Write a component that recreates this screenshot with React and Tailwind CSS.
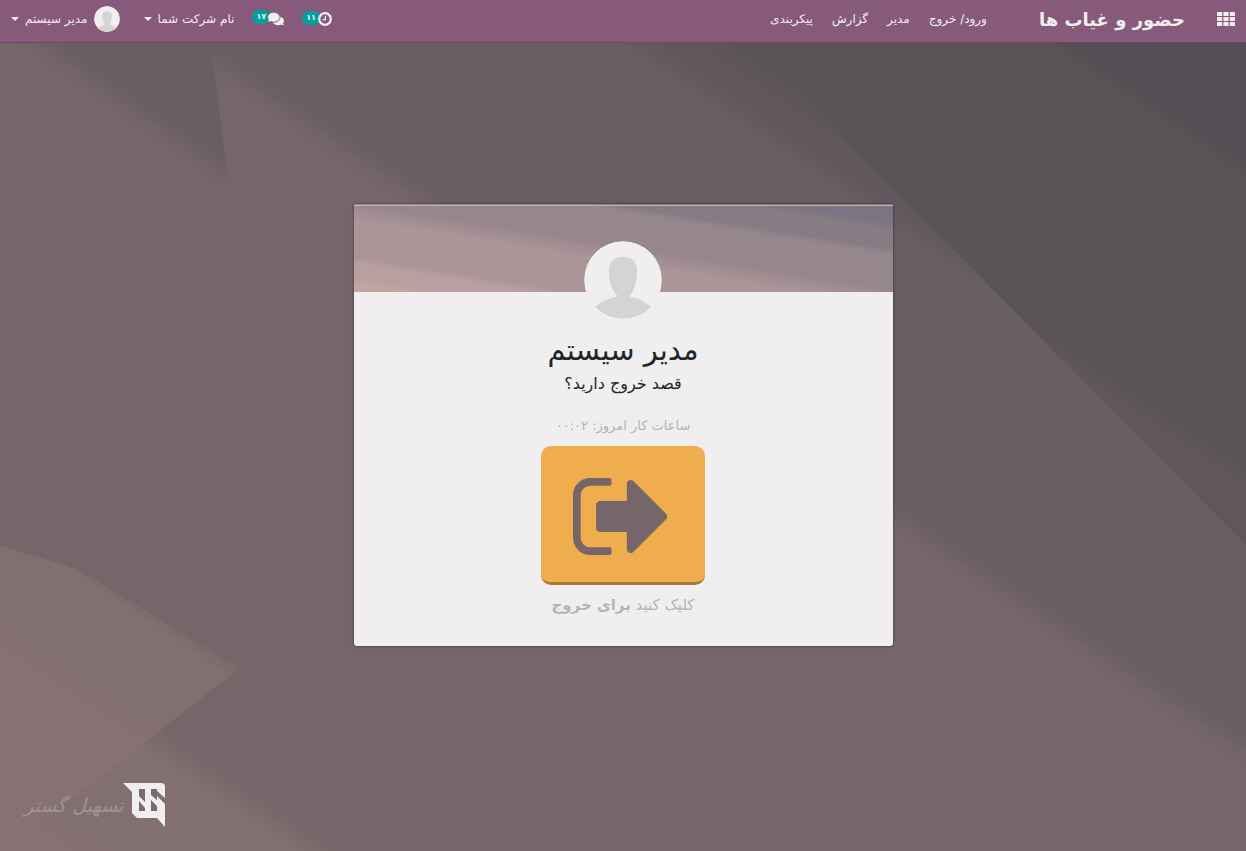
import React from 'react';
import { FaComments } from 'react-icons/fa';

const MENU = ['ورود/ خروج', 'مدیر', 'گزارش', 'پیکربندی'];

// Linear gradient made of flat bands. Each band starts under the line y = slope * x + c.
const BandGradient = ({ id, slope, soft, from, bands }) => {
    const len = Math.hypot(slope, 1);
    const reach = 1000;
    const nx = slope / len;
    const ny = -1 / len;
    const at = (c, shift) => (-c / len + shift + reach) / (2 * reach);
    let prev = from;
    const stops = [];
    bands.forEach(([c, color]) => {
        stops.push([at(c, -soft), prev], [at(c, soft), color]);
        prev = color;
    });

    return (
        <linearGradient
            id={id}
            gradientUnits="userSpaceOnUse"
            x1={-nx * reach}
            y1={-ny * reach}
            x2={nx * reach}
            y2={ny * reach}
        >
            {stops.map(([offset, color], i) => (
                <stop key={i} offset={offset} stopColor={color} />
            ))}
        </linearGradient>
    );
};

const Backdrop = () => (
    <svg className="absolute inset-0 w-full h-full" viewBox="0 0 1246 851" preserveAspectRatio="none" aria-hidden="true">
        <defs>
            <BandGradient
                id="bg-main"
                slope={0.67}
                soft={13}
                from="#877172"
                bands={[
                    [790, '#826f70'],
                    [637, '#766669'],
                    [-83, '#695e62'],
                    [-384, '#60575c'],
                    [-434, '#5a5357'],
                ]}
            />
            <BandGradient id="bg-left" slope={0.7} soft={13} from="#766669" bands={[[15, '#695e62']]} />
            <BandGradient
                id="bg-right"
                slope={0.67}
                soft={10}
                from="#60575c"
                bands={[[-358, '#5a5357'], [-665, '#534e53']]}
            />
            <BandGradient
                id="bg-pink"
                slope={0.67}
                soft={10}
                from="#877172"
                bands={[[636, '#826f70'], [512, '#766669']]}
            />
        </defs>
        <rect width="1246" height="851" fill="url(#bg-main)" />
        <path d="M0 0H206L228 180H0Z" fill="url(#bg-left)" />
        <path d="M805 100L1246 545V0H760Z" fill="url(#bg-right)" />
        <path d="M0 546L75 568L240 668L90 785L0 851Z" fill="url(#bg-pink)" />
    </svg>
);

const Banner = () => (
    <svg className="block w-full h-[88px]" viewBox="0 0 539 88" preserveAspectRatio="none" aria-hidden="true">
        <defs>
            <BandGradient
                id="banner-bands"
                slope={0.16}
                soft={3}
                from="#c2a5a5"
                bands={[
                    [76, '#b99fa0'],
                    [56, '#ab9599'],
                    [12, '#a18d92'],
                    [3, '#96878d'],
                    [-38, '#877b84'],
                    [-64, '#7b7482'],
                ]}
            />
        </defs>
        <rect width="539" height="88" fill="url(#banner-bands)" />
        <rect y="1" width="539" height="1" fill="#c9b0ae" />
    </svg>
);

const Avatar = ({ className }) => (
    <svg className={`rounded-full ${className}`} viewBox="0 0 78 78" role="img" aria-label="مدیر سیستم">
        <circle cx="39" cy="39" r="39" fill="#f0eeef" />
        <path
            d="M39 16C48 16 53 20 53 30C53 41 50 50 46 54V56C55 57 61 61 67 66A39 39 0 0 1 11 66C17 61 24 57 33 56V54C28 50 25 41 25 30C25 20 30 16 39 16Z"
            fill="#d4d4d4"
        />
    </svg>
);

const AppsIcon = () => (
    <svg className="w-[18px] h-[14px]" viewBox="0 0 18 14" fill="currentColor" aria-hidden="true">
        {[0, 5, 10].map(y => [0, 6.4, 12.8].map(x => (
            <rect key={`${x}-${y}`} x={x} y={y} width="5.2" height="4" rx="0.6" />
        )))}
    </svg>
);

const ClockIcon = () => (
    <svg className="relative z-10 w-3.5 h-3.5" viewBox="0 0 14 14" fill="none" stroke="currentColor" aria-hidden="true">
        <circle cx="7" cy="7" r="5.8" strokeWidth="2.2" />
        <path d="M7.4 3.8V7.6H4.6" strokeWidth="1.3" />
    </svg>
);

const SignOutIcon = () => (
    <svg className="w-[100px] h-[77px]" viewBox="0 256 1664 1280" fill="currentColor" aria-hidden="true">
        <path d="M640 1440q0 4 1 20t.5 26.5-3 23.5-10 19.5-20.5 6.5h-320q-119 0-203.5-84.5t-84.5-203.5v-704q0-119 84.5-203.5t203.5-84.5h320q13 0 22.5 9.5t9.5 22.5q0 4 1 20t.5 26.5-3 23.5-10 19.5-20.5 6.5h-320q-66 0-113 47t-47 113v704q0 66 47 113t113 47h312l11.5 1 11.5 3 8 5.5 7 9 2 13.5z" />
        <path d="M1568 896q0 26-19 45l-544 544q-19 19-45 19t-45-19-19-45v-288h-448q-26 0-45-19t-19-45v-384q0-26 19-45t45-19h448v-288q0-26 19-45t45-19 45 19l544 544q19 19 19 45z" />
    </svg>
);

const Caret = () => (
    <span className="border-x-4 border-t-4 border-x-transparent border-t-current" />
);

const Counter = ({ label, count, children }) => (
    <button type="button" aria-label={label} className="flex items-start">
        {children}
        <span className="-mt-px -mr-0.5 h-3.5 px-1 rounded-full bg-[#00a09d] text-[8px] leading-[14px] font-bold">
            {count}
        </span>
    </button>
);

const TopBar = () => (
    <header className="relative h-[43px] flex items-center justify-between px-[11px] pb-1 bg-[#875a7b] border-b border-[#6c4862] text-[#f0eeef] text-[12px]">
        <div className="flex items-center">
            <button type="button" aria-label="برنامه‌ها"><AppsIcon /></button>
            <a href="#attendances" className="mr-8 text-[18px] font-bold whitespace-nowrap">حضور و غیاب ها</a>
            <nav className="mr-[52px] flex items-center gap-[19px] whitespace-nowrap">
                {MENU.map(item => (
                    <a key={item} href="#menu">{item}</a>
                ))}
            </nav>
        </div>
        <div className="flex items-center whitespace-nowrap">
            <Counter label="فعالیت‌ها" count="۱۱"><ClockIcon /></Counter>
            <div className="mr-[18px]">
                <Counter label="گفتگوها" count="۱۷"><FaComments className="relative z-10 w-4 h-4" /></Counter>
            </div>
            <button type="button" className="mr-[18px] flex items-center gap-1.5">
                نام شرکت شما
                <Caret />
            </button>
            <button type="button" className="mr-6 flex items-center gap-1.5">
                <Avatar className="w-[26px] h-[26px]" />
                مدیر سیستم
                <Caret />
            </button>
        </div>
    </header>
);

const Brand = () => (
    <a href="#brand" className="absolute bottom-6 left-6 flex items-center text-[#9c9594]">
        <svg className="w-[42px] h-11" viewBox="0 0 42 44" aria-hidden="true">
            <path d="M0 0H38Q42 0 42 4V15L34 8V13L42 21V44L34 35H14L9 30V9Z" fill="#f0eeef" />
            <path d="M16 6H22V19L16 13ZM28 6H34V17L28 12ZM16 18L22 25V28H16ZM28 17L34 23V28H28Z" fill="#7a6a6d" />
        </svg>
        <span className="text-[19px] italic whitespace-nowrap">تسهیل گستر</span>
    </a>
);

const AttendanceCard = () => (
    <section className="relative w-full max-w-[539px] rounded-[3px] overflow-hidden bg-[#f0eeef] shadow-[0_0_3px_rgba(0,0,0,0.5)] text-center">
        <Banner />
        <Avatar className="relative mx-auto -mt-[51px] w-[78px] h-[78px]" />
        <h1 className="mt-[13px] text-[29px] leading-9 text-[#212529]">مدیر سیستم</h1>
        <h2 className="mt-1 text-[16px] leading-6 text-[#212529]">قصد خروج دارید؟</h2>
        <p className="mt-5 text-[13px] leading-5 text-[#adb5bd]">ساعات کار امروز: ۰۰:۰۲</p>
        <button
            type="button"
            aria-label="خروج"
            className="block mx-auto mt-2.5 h-[139px] px-8 pt-1.5 rounded-[10px] bg-[#f0ad4e] border-b-[3px] border-[#a87a3a] text-[#766669]"
        >
            <SignOutIcon />
        </button>
        <p className="mt-2 mb-[29px] text-[15px] leading-6 text-[#adb5bd]">
            کلیک کنید <b>برای خروج</b>
        </p>
    </section>
);

const App = () => (
    <div
        dir="rtl"
        className="relative min-h-screen flex flex-col overflow-hidden bg-[#766669] font-['DejaVu_Sans',sans-serif]"
    >
        <Backdrop />
        <TopBar />
        <main className="flex-1 flex items-center justify-center px-4 pb-[45px]">
            <AttendanceCard />
        </main>
        <Brand />
    </div>
);

export default App;
